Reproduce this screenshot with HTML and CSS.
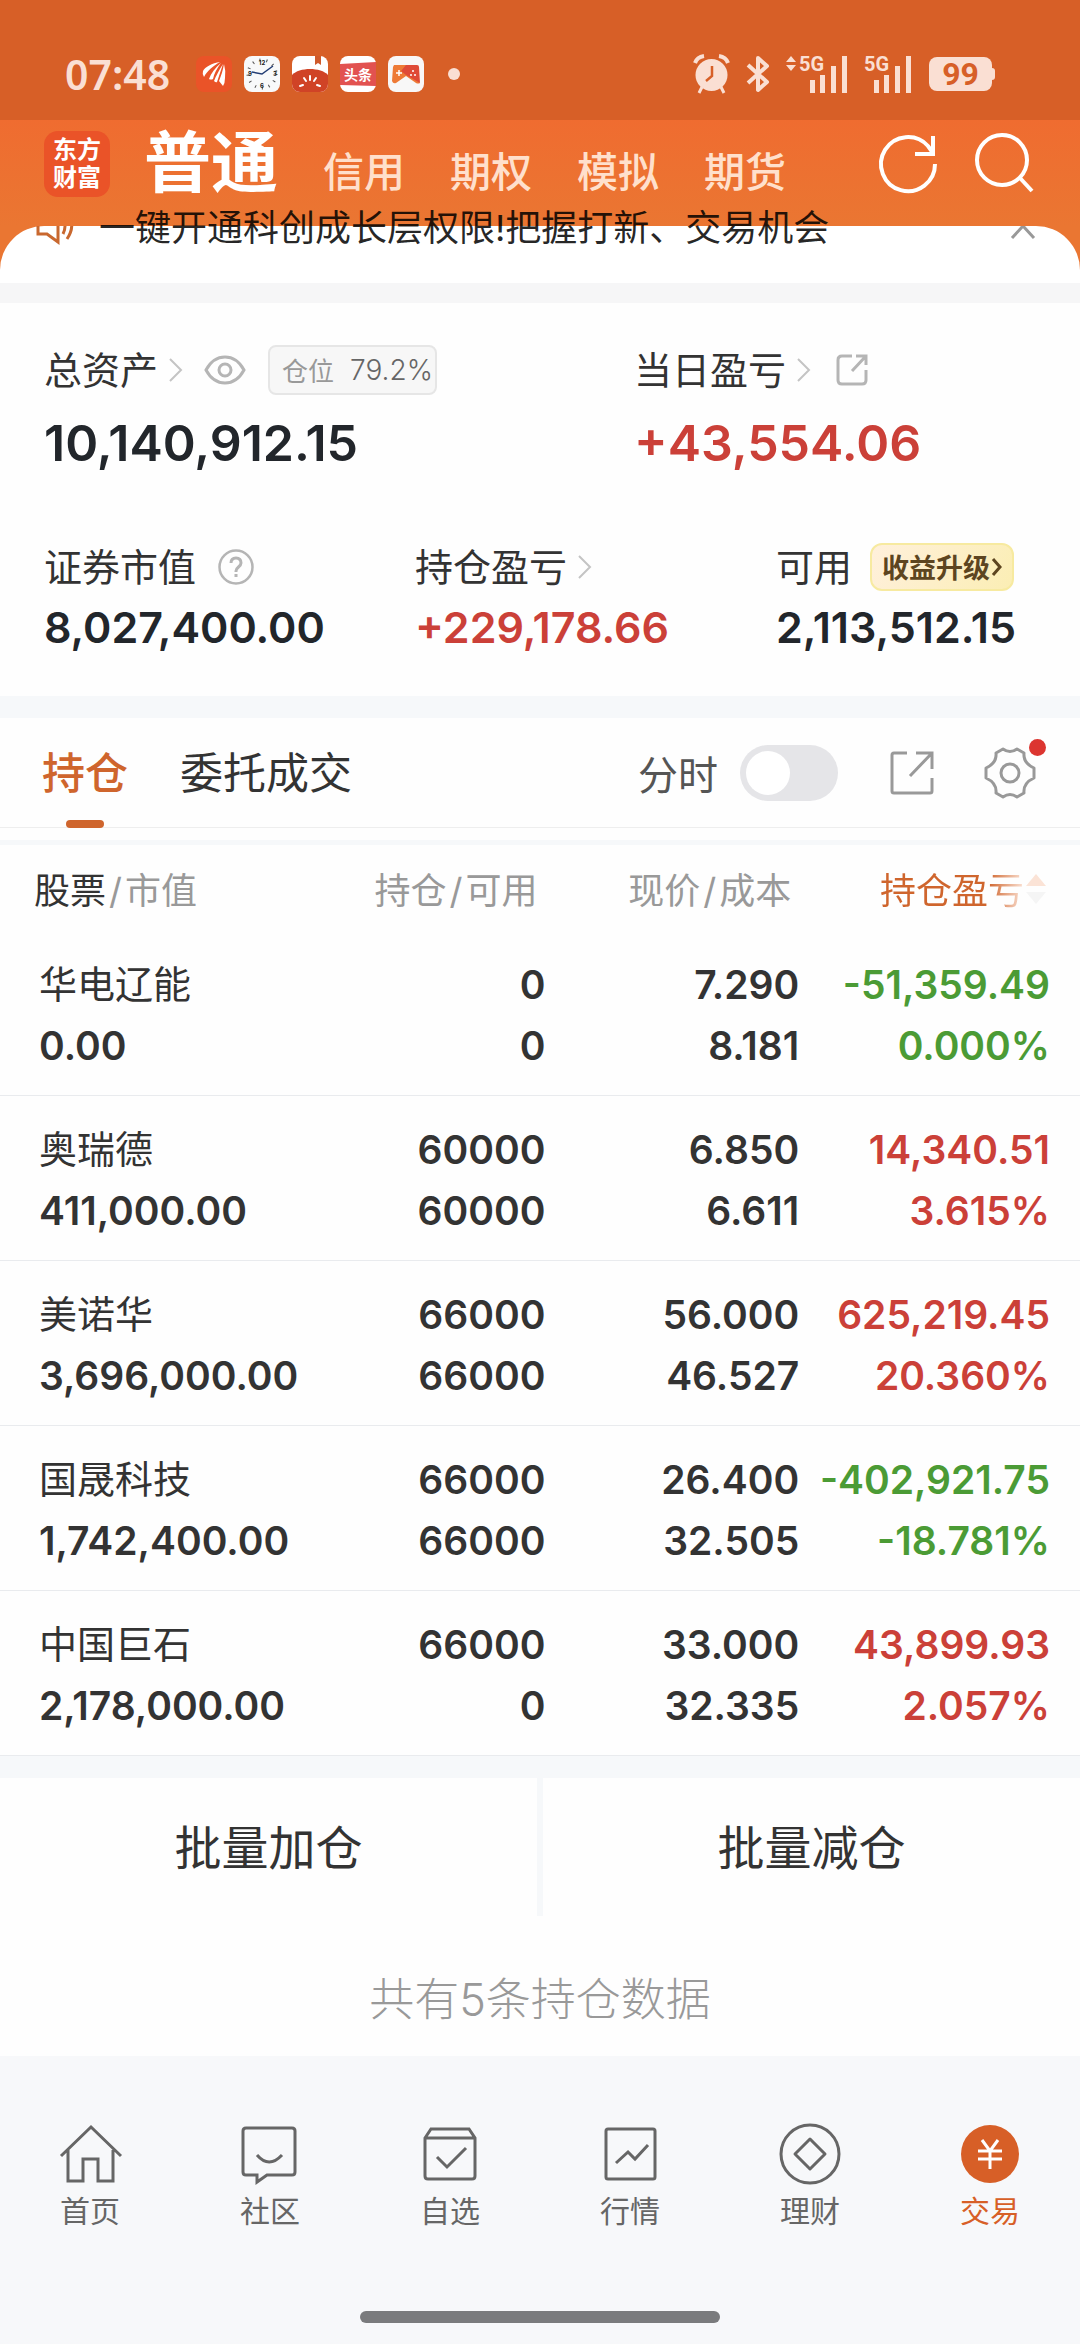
FILE: index.html
```html
<!DOCTYPE html>
<html lang="zh-CN">
<head>
    <meta charset="UTF-8">
    <meta name="viewport" content="width=device-width, initial-scale=1.0">
    <title>交易 - 普通</title>
    <link rel="stylesheet" href="styles.css">
</head>
<body>
    <div class="status-bar">
        <div class="status-left">
            <span class="time">07:48</span>
            <svg class="app-icon" viewBox="0 0 36 36">
                <rect width="36" height="36" rx="8" fill="#ea5328"/>
                <g fill="#fff">
                    <path d="M24 6C16 7 9 11 7 15q-1 3 1 6C11 15 17 10 24 6z"/>
                    <path d="M25 7C19 12 15 17 13 23q2 1 4 0C18 18 21 12 25 7z"/>
                    <path d="M27 8C23 14 20 20 18 25q2 2 3 1C23 20 25 14 27 8z"/>
                    <path d="M28 8C27 14 25 20 23 25l4 5q2-3 2-8 1-7-1-14z"/>
                </g>
            </svg>
            <svg class="app-icon" viewBox="0 0 36 36">
                <rect width="36" height="36" rx="8" fill="#f8f9fa"/>
                <circle cx="18" cy="18" r="14" fill="none" stroke="#555" stroke-width="3" stroke-dasharray="1 6"/>
                <g font-family="Inter" font-size="6" font-weight="700" fill="#222" text-anchor="middle">
                    <text x="18" y="9">12</text>
                    <text x="31" y="20">3</text>
                    <text x="18" y="32">6</text>
                    <text x="6" y="20">9</text>
                </g>
                <path d="M8 16l10 2 11-8" fill="none" stroke="#223c73" stroke-width="1.5"/>
            </svg>
            <svg class="app-icon" viewBox="0 0 36 36">
                <rect width="36" height="36" rx="8" fill="#fff"/>
                <path d="M0 19C7 11 29 11 36 19v9a8 8 0 0 1-8 8H8a8 8 0 0 1-8-8z" fill="#d04326"/>
                <path d="M23 0h6v9l-3-2-3 2z" fill="#cf5a2b"/>
                <path d="M18 20v4M12 22l2 3M24 22l-2 3M8 30l3-1M28 30l-3-1" stroke="#fff" stroke-width="2" stroke-linecap="round"/>
            </svg>
            <svg class="app-icon" viewBox="0 0 36 36">
                <rect width="36" height="36" rx="8" fill="#fff"/>
                <path d="M0 8l36-2v24L0 29z" fill="#e25250"/>
                <text x="18" y="24" font-family="Noto Sans CJK SC" font-size="14" font-weight="700" fill="#fff" text-anchor="middle">头条</text>
            </svg>
            <svg class="app-icon" viewBox="0 0 36 36">
                <rect width="36" height="36" rx="8" fill="#f8f7f7"/>
                <path d="M6 9h12l14 18q-2 1-4 0L18 20 8 27q-3 1-4-2L5 11z" fill="#ee7a36"/>
                <path d="M18 9h11q2 0 2 2l1 16-14-8-5-4z" fill="#df4a37"/>
                <path d="M8 17h6M11 14v6" stroke="#fff" stroke-width="1.5"/>
                <g fill="#fff"><circle cx="25" cy="15" r="1"/><circle cx="23" cy="19" r="1"/><circle cx="27" cy="19" r="1"/></g>
            </svg>
            <span class="more-dot"></span>
        </div>
        <div class="status-right">
            <svg width="37" height="40" viewBox="0 0 37 40" fill="none" stroke="#fadfd3">
                <circle cx="18.500" cy="21" r="16" fill="#fadfd3" stroke="none"/>
                <path d="M2 9q2-6 9-7M35 9q-2-6-9-7" stroke-width="4"/>
                <path d="M9 33l-3 6M28 33l3 6" stroke-width="3"/>
                <path d="M19 12v10l-6 5" stroke="#d75f27" stroke-width="2.500"/>
            </svg>
            <svg width="24" height="40" viewBox="0 0 24 40" fill="none" stroke="#fadfd3" stroke-width="4">
                <path d="M2 11l19 17-9 8V4l9 8L2 29" stroke-linejoin="round"/>
            </svg>
            <svg width="62" height="40" viewBox="0 0 62 40" fill="#fadfd3">
                <path d="M0 8l5-6 5 6zM0 11h10l-5 6z"/>
                <text class="net" x="13" y="17">5G</text>
                <path d="M24 26h5v13h-5zM34 21h5v18h-5zM45 12h5v27h-5zM56 2h5v37h-5z"/>
            </svg>
            <svg width="49" height="40" viewBox="0 0 49 40" fill="#fadfd3">
                <text class="net" x="0" y="17">5G</text>
                <path d="M10 26h5v13h-5zM20 21h5v18h-5zM31 12h5v27h-5zM42 2h5v37h-5z"/>
            </svg>
            <span class="battery">99</span>
        </div>
    </div>

    <header class="header">
        <div class="logo"><span>东方</span><span>财富</span></div>
        <nav class="account-tabs">
            <a class="active" href="#">普通</a>
            <a href="#">信用</a>
            <a href="#">期权</a>
            <a href="#">模拟</a>
            <a href="#">期货</a>
        </nav>
        <div class="header-actions">
            <button type="button" aria-label="刷新">
                <svg width="60" height="60" viewBox="0 0 60 60" fill="none" stroke="#fff" stroke-width="4">
                    <path d="M57 31A27 27 0 1 1 50 13l5 7"/>
                    <path d="M55 3v18H37"/>
                </svg>
            </button>
            <button type="button" aria-label="搜索">
                <svg width="60" height="60" viewBox="0 0 60 60" fill="none" stroke="#fff" stroke-width="4">
                    <circle cx="28" cy="27" r="25"/>
                    <path d="M46 45l12 13"/>
                </svg>
            </button>
        </div>
    </header>

    <div class="notice-wrap">
        <div class="notice">
            <div class="notice-clip">
                <svg width="40" height="40" viewBox="0 0 40 40" fill="none" stroke="#c9682f" stroke-width="3">
                    <path d="M2 13h9l11-9v32L11 28H2zM27 13q4 7 0 15M32 6q8 14-1 27"/>
                </svg>
                <svg class="notice-close" width="26" height="18" viewBox="0 0 26 18" fill="none" stroke="#999" stroke-width="3">
                    <path d="M2 16L13 4l11 12"/>
                </svg>
            </div>
            <p>一键开通科创成长层权限!把握打新、交易机会</p>
        </div>
    </div>

    <section class="summary">
        <div class="summary-row summary-main">
            <div class="stat">
                <div class="label">
                    <span>总资产</span>
                    <svg class="arrow" viewBox="0 0 16 24"><path d="M2 1l11 11L2 23"/></svg>
                    <svg class="eye" width="42" height="30" viewBox="0 0 42 30" fill="none" stroke="#b5b5b5" stroke-width="3">
                        <path d="M2 15Q9 2 21 2t19 13q-7 13-19 13T2 15z"/>
                        <circle cx="21" cy="15" r="6"/>
                    </svg>
                    <span class="ratio">仓位<b>79.2%</b></span>
                </div>
                <div class="value big">10,140,912.15</div>
            </div>
            <div class="stat">
                <div class="label">
                    <span>当日盈亏</span>
                    <svg class="arrow" viewBox="0 0 16 24"><path d="M2 1l11 11L2 23"/></svg>
                    <svg class="share" width="32" height="32" viewBox="0 0 32 32" fill="none" stroke="#b5b5b5" stroke-width="3">
                        <path d="M16 2H6Q2 2 2 6v20q0 4 4 4h20q4 0 4-4V16M20 2h10v9M30 2L16 17"/>
                    </svg>
                </div>
                <div class="value big up">+43,554.06</div>
            </div>
        </div>
        <div class="summary-row summary-more">
            <div class="stat">
                <div class="label">
                    <span>证券市值</span>
                    <svg class="help" width="36" height="36" viewBox="0 0 36 36" fill="none" stroke="#b5b5b5">
                        <circle cx="18" cy="18" r="16.500" stroke-width="2.500"/>
                        <path d="M13 14q0-5 5-5t5 5q0 2-2.500 4T18 22v1" stroke-width="3"/>
                        <path d="M18 25v3" stroke-width="3"/>
                    </svg>
                </div>
                <div class="value">8,027,400.00</div>
            </div>
            <div class="stat">
                <div class="label">
                    <span>持仓盈亏</span>
                    <svg class="arrow" viewBox="0 0 16 24"><path d="M2 1l11 11L2 23"/></svg>
                </div>
                <div class="value up">+229,178.66</div>
            </div>
            <div class="stat">
                <div class="label">
                    <span>可用</span>
                    <a class="upgrade" href="#">收益升级<svg width="10" height="18" viewBox="0 0 10 18" fill="none" stroke="#5d4520" stroke-width="3"><path d="M1 1l7 8-7 8"/></svg></a>
                </div>
                <div class="value">2,113,512.15</div>
            </div>
        </div>
    </section>

    <div class="toolbar">
        <nav class="tabs">
            <a class="active" href="#">持仓</a>
            <a href="#">委托成交</a>
        </nav>
        <label class="switch-label" for="timeline">分时</label>
        <input class="switch" type="checkbox" id="timeline">
        <button type="button" aria-label="分享">
            <svg width="44" height="44" viewBox="0 0 44 44" fill="none" stroke="#999" stroke-width="3">
                <path d="M17 2H4Q2 2 2 4v36q0 2 2 2h36q2 0 2-2V27M26 2h16v16M42 2L20 25"/>
            </svg>
        </button>
        <button class="settings" type="button" aria-label="设置">
            <svg width="52" height="52" viewBox="0 0 52 52" fill="none" stroke="#999" stroke-width="3" stroke-linejoin="round">
                <path d="M19 2Q26 7 33 2L40 6Q39 16 50 21V31Q39 36 40 46L33 50Q26 45 19 50L12 46Q13 36 2 31V21Q13 16 12 6Z"/>
                <circle cx="26" cy="26" r="9"/>
            </svg>
            <span class="badge"></span>
        </button>
    </div>

    <table class="positions">
        <thead>
            <tr>
                <th><b>股票</b><i>/</i>市值</th>
                <th>持仓<i>/</i>可用</th>
                <th>现价<i>/</i>成本</th>
                <th class="sorted"><span>持仓盈亏</span><svg width="20" height="30" viewBox="0 0 20 30"><path d="M0 12L10 0l10 12z" fill="#fbe3d6"/><path d="M0 18h20L10 30z" fill="#f5f5f5"/></svg></th>
            </tr>
        </thead>
        <tbody>
            <tr>
                <td><span class="name">华电辽能</span><span>0.00</span></td>
                <td><span>0</span><span>0</span></td>
                <td><span>7.290</span><span>8.181</span></td>
                <td class="down"><span>-51,359.49</span><span>0.000%</span></td>
            </tr>
            <tr>
                <td><span class="name">奥瑞德</span><span>411,000.00</span></td>
                <td><span>60000</span><span>60000</span></td>
                <td><span>6.850</span><span>6.611</span></td>
                <td class="up"><span>14,340.51</span><span>3.615%</span></td>
            </tr>
            <tr>
                <td><span class="name">美诺华</span><span>3,696,000.00</span></td>
                <td><span>66000</span><span>66000</span></td>
                <td><span>56.000</span><span>46.527</span></td>
                <td class="up"><span>625,219.45</span><span>20.360%</span></td>
            </tr>
            <tr>
                <td><span class="name">国晟科技</span><span>1,742,400.00</span></td>
                <td><span>66000</span><span>66000</span></td>
                <td><span>26.400</span><span>32.505</span></td>
                <td class="down"><span>-402,921.75</span><span>-18.781%</span></td>
            </tr>
            <tr>
                <td><span class="name">中国巨石</span><span>2,178,000.00</span></td>
                <td><span>66000</span><span>0</span></td>
                <td><span>33.000</span><span>32.335</span></td>
                <td class="up"><span>43,899.93</span><span>2.057%</span></td>
            </tr>
        </tbody>
    </table>

    <div class="batch">
        <button type="button">批量加仓</button>
        <button type="button">批量减仓</button>
    </div>
    <p class="total">共有5条持仓数据</p>

    <footer class="footer">
        <nav class="bottom-nav">
            <a href="#">
                <svg viewBox="0 0 64 64"><path d="M3 34L33 5l30 29M10 28v31h15V37h15v22h15V28"/></svg>
                首页
            </a>
            <a href="#">
                <svg viewBox="0 0 64 64"><path d="M8 6h46q3 0 3 3v41q0 3-3 3H29l-10 7v-7H8q-3 0-3-3V9q0-3 3-3zM19 33q12 14 25 0"/></svg>
                社区
            </a>
            <a href="#">
                <svg viewBox="0 0 64 64"><path d="M7 16l6-9h38l6 9v38q0 3-3 3H10q-3 0-3-3zM7 16h50M19 35l10 10 19-19"/></svg>
                自选
            </a>
            <a href="#">
                <svg viewBox="0 0 64 64"><rect x="8" y="7" width="49" height="50" rx="2"/><path d="M18 41l12-11 7 7 13-14"/></svg>
                行情
            </a>
            <a href="#">
                <svg viewBox="0 0 64 64"><circle cx="32" cy="32" r="29"/><path d="M32 17l15 15-15 15-15-15z" stroke-linejoin="round"/></svg>
                理财
            </a>
            <a class="active" href="#">
                <svg viewBox="0 0 64 64"><circle cx="32" cy="32" r="29" fill="#d75f27" stroke="none"/><path d="M24 18l8 11 8-11M20 29h24M20 37h24M32 29v18" stroke="#fff"/></svg>
                交易
            </a>
        </nav>
        <div class="home-bar"></div>
    </footer>
</body>
</html>
```
FILE: styles.css
```css
* {
    box-sizing: border-box;
}
body {
    font-family: Inter, "Noto Sans CJK SC", sans-serif;
    background-color: #fefefe;
    color: #333;
    margin: 0;
}
a {
    color: inherit;
    text-decoration: none;
}
p {
    margin: 0;
}
svg {
    display: block;
    flex: none;
    overflow: visible;
}
button {
    padding: 0;
    border: none;
    background: none;
    color: inherit;
    font-family: inherit;
    cursor: pointer;
}

/* status bar */
.status-bar {
    display: flex;
    justify-content: space-between;
    height: 120px;
    padding: 28px 88px 0 65px;
    background-color: #d75f27;
    color: #fadfd3;
}
.status-left,
.status-right {
    display: flex;
    align-items: center;
}
.status-left {
    gap: 12px;
}
.status-right {
    gap: 16px;
}
.time {
    margin-right: 14px;
    font-family: "Noto Sans", sans-serif;
    font-size: 41px;
    font-weight: 600;
}
.app-icon {
    width: 36px;
    height: 36px;
}
.more-dot {
    width: 12px;
    height: 12px;
    margin-left: 12px;
    border-radius: 50%;
    background-color: #fadfd3;
}
.net {
    font-family: Roboto, sans-serif;
    font-size: 20px;
    font-weight: 700;
}
.battery {
    position: relative;
    width: 63px;
    border-radius: 8px;
    background-color: #fadfd3;
    color: #d75f27;
    font-family: Roboto, sans-serif;
    font-size: 32px;
    font-weight: 700;
    line-height: 34px;
    text-align: center;
}
.battery::after {
    content: "";
    position: absolute;
    top: 11px;
    right: -3px;
    width: 4px;
    height: 12px;
    border-radius: 0 3px 3px 0;
    background-color: #fadfd3;
}

/* header */
.header {
    display: flex;
    align-items: flex-start;
    height: 106px;
    padding: 11px 46px 0 44px;
    background: linear-gradient(#ef6c30, #ea7632);
    color: #fff;
}
.logo {
    display: flex;
    flex-direction: column;
    justify-content: center;
    width: 66px;
    height: 66px;
    border-radius: 14px;
    background-color: #ea5328;
    font-size: 24px;
    font-weight: 700;
    line-height: 28px;
    text-align: center;
}
.account-tabs {
    display: flex;
    align-items: baseline;
    gap: 45px;
    margin-left: 34px;
    color: #ffe0cc;
    font-size: 41px;
    font-weight: 500;
    line-height: 64px;
}
.account-tabs .active {
    color: #fff;
    font-size: 67px;
    font-weight: 700;
}
.header-actions {
    display: flex;
    gap: 36px;
    margin-left: auto;
    padding-top: 2px;
}

/* notice, its text runs over the header edge */
.notice-wrap {
    background-color: #ea7632;
}
.notice {
    position: relative;
    height: 57px;
    border-radius: 44px 44px 0 0;
    background-color: #fff;
}
.notice-clip {
    display: flex;
    justify-content: space-between;
    align-items: flex-start;
    height: 20px;
    padding: 0 44px 0 36px;
    overflow: hidden;
}
.notice-clip svg:first-child {
    margin-top: -20px;
}
.notice-close {
    margin-top: -4px;
}
.notice p {
    position: absolute;
    left: 99px;
    top: -18px;
    color: rgba(0, 0, 0, 0.85);
    font-size: 36px;
    line-height: 40px;
}

/* summary */
.summary {
    padding: 40px 44px 36px;
    border-top: 20px solid #f6f6f7;
}
.summary-row {
    display: grid;
}
.summary-main {
    grid-template-columns: 590fr 402fr;
    margin-bottom: 51px;
}
.summary-more {
    grid-template-columns: 371fr 361fr 260fr;
}
.label {
    display: flex;
    align-items: center;
    height: 54px;
    font-family: "Noto Sans CJK SC", sans-serif;
    font-size: 38px;
    line-height: 50px;
    white-space: nowrap;
}
.label > span:first-child {
    padding-bottom: 4px;
}
.arrow {
    width: 16px;
    height: 24px;
    margin-left: 10px;
    fill: none;
    stroke: #c4c4c4;
    stroke-width: 2px;
}
.eye {
    margin-left: 20px;
}
.help {
    margin-left: 22px;
}
.share {
    margin-left: 24px;
}
.ratio {
    display: flex;
    align-items: center;
    gap: 16px;
    margin-left: 22px;
    padding: 0 2px 0 12px;
    border: 2px solid #e6e6e6;
    border-radius: 8px;
    background-color: #f7f7f7;
    color: #999;
    font-size: 26px;
    line-height: 46px;
}
.ratio b {
    color: #666;
    font-family: Inter, sans-serif;
    font-size: 28px;
    font-weight: 300;
}
.value {
    color: #22262b;
    font-size: 43px;
    font-weight: 600;
    line-height: 66px;
    white-space: nowrap;
}
.value.big {
    font-size: 50px;
    line-height: 92px;
}
.value.up,
.up {
    color: #cb4038;
}
.down {
    color: #4b9b35;
}
.upgrade {
    display: flex;
    align-items: center;
    gap: 2px;
    margin-left: 18px;
    padding: 0 10px;
    border: 2px solid #f7eaa0;
    border-radius: 12px;
    background: linear-gradient(120deg, #fff0dc, #fbeeb4);
    color: #5d4520;
    font-size: 27px;
    font-weight: 700;
    line-height: 44px;
}

/* toolbar */
.toolbar {
    display: flex;
    align-items: center;
    height: 132px;
    padding: 0 44px 0 42px;
    border-top: 22px solid #f6f8fa;
    border-bottom: 1px solid #eee;
}
.tabs {
    display: flex;
    gap: 52px;
    margin-right: auto;
    font-size: 43px;
    line-height: 110px;
}
.tabs .active {
    position: relative;
    color: #cf652d;
    font-weight: 500;
}
.tabs .active::after {
    content: "";
    position: absolute;
    left: 50%;
    bottom: 0;
    width: 38px;
    height: 8px;
    margin-left: -19px;
    border-radius: 4px;
    background-color: #cf652d;
}
.switch-label {
    color: #555;
    font-size: 40px;
}
.switch {
    appearance: none;
    width: 98px;
    height: 56px;
    margin: 0 52px 0 22px;
    padding: 6px;
    border-radius: 28px;
    background-color: #e5e5e8;
}
.switch::before {
    content: "";
    display: block;
    width: 44px;
    height: 44px;
    border-radius: 50%;
    background-color: #fff;
}
.switch:checked::before {
    margin-left: auto;
}
.settings {
    position: relative;
    margin-left: 50px;
}
.badge {
    position: absolute;
    top: -8px;
    right: -10px;
    width: 17px;
    height: 17px;
    border-radius: 50%;
    background-color: #dc3530;
}

/* positions */
.positions {
    width: 100%;
    margin-top: 12px;
    border-top: 5px solid #f6f8fa;
    border-collapse: separate;
    border-spacing: 0;
    table-layout: fixed;
}
.positions th {
    height: 86px;
    padding: 0 8px 0 0;
    color: #999;
    font-size: 36px;
    font-weight: 400;
    text-align: right;
    white-space: nowrap;
}
.positions th:first-child {
    width: 32%;
    padding-left: 34px;
    text-align: left;
}
.positions th:nth-child(2) {
    width: 18.5%;
}
.positions th:nth-child(4) {
    width: 26%;
    padding-right: 34px;
}
.positions th b {
    color: #333;
    font-weight: 400;
}
.positions th i {
    margin: 0 3px;
    font-style: normal;
}
.sorted span {
    background: linear-gradient(90deg, #cf652d 75%, #fbe3d6);
    background-clip: text;
    color: transparent;
}
.sorted svg {
    display: inline-block;
    margin-left: 2px;
}
.positions td {
    height: 165px;
    padding: 3px 0 0;
    border-bottom: 1px solid #e9ebee;
    font-size: 39px;
    font-weight: 600;
    line-height: 61px;
    text-align: right;
    white-space: nowrap;
}
.positions td:first-child {
    padding-left: 39px;
    text-align: left;
}
.positions td:last-child {
    padding-right: 30px;
}
.positions td span {
    display: block;
}
.positions .name {
    font-size: 38px;
    font-weight: 400;
}

/* batch buttons */
.batch {
    display: flex;
    gap: 6px;
    border-top: 22px solid #f6f8fa;
    background-color: #f6f8fa;
}
.batch button {
    flex: 1;
    padding-top: 2px;
    background-color: #fefefe;
    font-size: 47px;
    line-height: 136px;
}
.total {
    padding-top: 28px;
    color: #999;
    font-size: 45px;
    font-weight: 300;
    line-height: 112px;
    text-align: center;
}

/* bottom nav */
.footer {
    min-height: 288px;
    padding: 66px 0 20px;
    background-color: #f7f8fa;
}
.bottom-nav {
    display: grid;
    grid-template-columns: repeat(6, 1fr);
    color: #666;
    font-size: 30px;
    line-height: 46px;
}
.bottom-nav a {
    display: flex;
    flex-direction: column;
    align-items: center;
    gap: 2px;
}
.bottom-nav svg {
    width: 64px;
    height: 64px;
    fill: none;
    stroke: #666;
    stroke-width: 3px;
}
.bottom-nav .active {
    color: #d75f27;
}
.home-bar {
    width: 33.3333%;
    height: 12px;
    margin: 77px auto 0;
    border-radius: 6px;
    background-color: #7a7b7d;
}
```
